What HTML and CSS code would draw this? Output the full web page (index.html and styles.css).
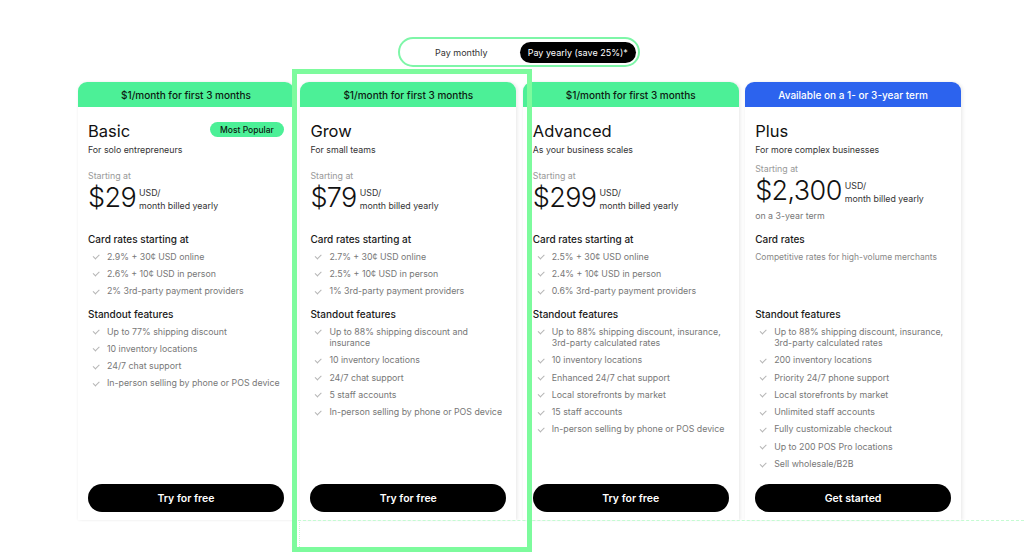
FILE: index.html
```html
<!DOCTYPE html>
<html lang="en">
<head>
<meta charset="utf-8">
<title>Pricing</title>
<link rel="stylesheet" href="styles.css">
</head>
<body>
<main class="page">
  <div class="toggle">
    <span class="toggle__opt">Pay monthly</span>
    <span class="toggle__opt toggle__opt--active">Pay yearly (save 25%)*</span>
  </div>

  <div class="plans">
    <article class="plan">
      <div class="plan__banner">$1/month for first 3 months</div>
      <div class="plan__body">
        <div class="plan__top">
          <h2 class="plan__name">Basic</h2>
          <span class="badge">Most Popular</span>
        </div>
        <p class="plan__tag">For solo entrepreneurs</p>
        <div class="price">
          <p class="price__label">Starting at</p>
          <div class="price__row">
            <span class="price__amount">$29</span>
            <span class="price__unit">USD/<br>month billed yearly</span>
          </div>
        </div>
        <section class="feat feat--rates">
          <h3 class="feat__title">Card rates starting at</h3>
          <ul class="feat__list">
            <li>2.9% + 30¢ USD online</li>
            <li>2.6% + 10¢ USD in person</li>
            <li>2% 3rd-party payment providers</li>
          </ul>
        </section>
        <section class="feat">
          <h3 class="feat__title">Standout features</h3>
          <ul class="feat__list">
            <li>Up to 77% shipping discount</li>
            <li>10 inventory locations</li>
            <li>24/7 chat support</li>
            <li>In-person selling by phone or POS device</li>
          </ul>
        </section>
        <a class="btn" href="#">Try for free</a>
      </div>
    </article>

    <article class="plan">
      <div class="plan__banner">$1/month for first 3 months</div>
      <div class="plan__body">
        <div class="plan__top">
          <h2 class="plan__name">Grow</h2>
        </div>
        <p class="plan__tag">For small teams</p>
        <div class="price">
          <p class="price__label">Starting at</p>
          <div class="price__row">
            <span class="price__amount">$79</span>
            <span class="price__unit">USD/<br>month billed yearly</span>
          </div>
        </div>
        <section class="feat feat--rates">
          <h3 class="feat__title">Card rates starting at</h3>
          <ul class="feat__list">
            <li>2.7% + 30¢ USD online</li>
            <li>2.5% + 10¢ USD in person</li>
            <li>1% 3rd-party payment providers</li>
          </ul>
        </section>
        <section class="feat">
          <h3 class="feat__title">Standout features</h3>
          <ul class="feat__list">
            <li>Up to 88% shipping discount and insurance</li>
            <li>10 inventory locations</li>
            <li>24/7 chat support</li>
            <li>5 staff accounts</li>
            <li>In-person selling by phone or POS device</li>
          </ul>
        </section>
        <a class="btn" href="#">Try for free</a>
      </div>
    </article>

    <article class="plan">
      <div class="plan__banner">$1/month for first 3 months</div>
      <div class="plan__body">
        <div class="plan__top">
          <h2 class="plan__name">Advanced</h2>
        </div>
        <p class="plan__tag">As your business scales</p>
        <div class="price">
          <p class="price__label">Starting at</p>
          <div class="price__row">
            <span class="price__amount">$299</span>
            <span class="price__unit">USD/<br>month billed yearly</span>
          </div>
        </div>
        <section class="feat feat--rates">
          <h3 class="feat__title">Card rates starting at</h3>
          <ul class="feat__list">
            <li>2.5% + 30¢ USD online</li>
            <li>2.4% + 10¢ USD in person</li>
            <li>0.6% 3rd-party payment providers</li>
          </ul>
        </section>
        <section class="feat">
          <h3 class="feat__title">Standout features</h3>
          <ul class="feat__list">
            <li>Up to 88% shipping discount, insurance, 3rd-party calculated rates</li>
            <li>10 inventory locations</li>
            <li>Enhanced 24/7 chat support</li>
            <li>Local storefronts by market</li>
            <li>15 staff accounts</li>
            <li>In-person selling by phone or POS device</li>
          </ul>
        </section>
        <a class="btn" href="#">Try for free</a>
      </div>
    </article>

    <article class="plan">
      <div class="plan__banner plan__banner--blue">Available on a 1- or 3-year term</div>
      <div class="plan__body">
        <div class="plan__top">
          <h2 class="plan__name">Plus</h2>
        </div>
        <p class="plan__tag">For more complex businesses</p>
        <div class="price price--compact">
          <p class="price__label">Starting at</p>
          <div class="price__row">
            <span class="price__amount">$2,300</span>
            <span class="price__unit">USD/<br>month billed yearly</span>
          </div>
          <p class="price__note">on a 3-year term</p>
        </div>
        <section class="feat feat--rates">
          <h3 class="feat__title">Card rates</h3>
          <p class="feat__text">Competitive rates for high-volume merchants</p>
        </section>
        <section class="feat">
          <h3 class="feat__title">Standout features</h3>
          <ul class="feat__list">
            <li>Up to 88% shipping discount, insurance, 3rd-party calculated rates</li>
            <li>200 inventory locations</li>
            <li>Priority 24/7 phone support</li>
            <li>Local storefronts by market</li>
            <li>Unlimited staff accounts</li>
            <li>Fully customizable checkout</li>
            <li>Up to 200 POS Pro locations</li>
            <li>Sell wholesale/B2B</li>
          </ul>
        </section>
        <a class="btn" href="#">Get started</a>
      </div>
    </article>
  </div>

  <div class="guide guide--h"></div>
  <div class="guide guide--v"></div>
  <div class="highlight"></div>
</main>
</body>
</html>
```

FILE: styles.css
```css
* { box-sizing: border-box; }

html, body {
  margin: 0;
  padding: 0;
  background: #fff;
}

body {
  font-family: Inter, "Noto Sans", "Liberation Sans", sans-serif;
  color: #111;
  -webkit-font-smoothing: antialiased;
}

.page {
  position: relative;
  width: 1024px;
  height: 553px;
  padding: 37px 0 0 78px;
  overflow: hidden;
}

/* toggle */
.toggle {
  display: grid;
  grid-template-columns: 1fr 1fr;
  width: 242px;
  height: 30px;
  margin: 0 0 15px 320px;
  padding: 3px 2px 2px 3px;
  border: 2px solid #7ef6a8;
  border-radius: 16px;
  background: #fff;
}

.toggle__opt {
  display: flex;
  align-items: center;
  justify-content: center;
  font-size: 9px;
  color: #333;
  border-radius: 11px;
  height: 21px;
}

.toggle__opt--active {
  background: #000;
  color: #fff;
}

/* plans grid */
.plans {
  display: grid;
  grid-template-columns: repeat(4, 1fr);
  column-gap: 6.5px;
  width: 883px;
}

.plan {
  display: flex;
  flex-direction: column;
  height: 438px;
  background: #fff;
  border-radius: 9px 9px 0 0;
  box-shadow: 0 0 3px rgba(0, 0, 0, 0.07), 3px 0 3px rgba(0, 0, 0, 0.04);
}

.plan__banner {
  height: 25px;
  display: flex;
  align-items: center;
  justify-content: center;
  background: #4cf097;
  color: #0d1a12;
  font-size: 10px;
  font-weight: 500;
  border-radius: 9px 9px 0 0;
}

.plan__banner--blue {
  background: #2c63ee;
  color: #fff;
}

.plan__body {
  flex: 1;
  display: flex;
  flex-direction: column;
  padding: 14px 10px 8px 10px;
}

.plan__top {
  display: flex;
  justify-content: space-between;
  align-items: flex-start;
}

.plan__name {
  margin: 0;
  font-size: 16.5px;
  line-height: 21px;
  font-weight: 400;
  color: #111;
}

.badge {
  margin-top: 1px;
  height: 15px;
  padding: 0 10px;
  display: flex;
  align-items: center;
  background: #4cf097;
  color: #0d1a12;
  border-radius: 8px;
  font-size: 8.5px;
  font-weight: 500;
}

.plan__tag {
  margin: 2px 0 0;
  font-size: 8.8px;
  line-height: 12px;
  color: #333;
}

/* price */
.price {
  margin-top: 14px;
  height: 52px;
}

.price--compact {
  margin-top: 7px;
  height: 59px;
}

.price__label {
  margin: 0;
  font-size: 8.8px;
  line-height: 12px;
  color: #999;
}

.price__row {
  display: flex;
  align-items: flex-start;
}

.price__amount {
  font-size: 27px;
  line-height: 32px;
  font-weight: 300;
  letter-spacing: -0.6px;
  color: #111;
}

.price__unit {
  margin: 4px 0 0 3px;
  font-size: 8.8px;
  line-height: 13px;
  color: #333;
}

.price__note {
  margin: 3px 0 0;
  font-size: 8.8px;
  line-height: 12px;
  color: #777;
}

/* features */
.feat {
  margin-top: 10px;
}

.feat--rates {
  margin-top: 10px;
  min-height: 65px;
}

.feat__title {
  margin: 0;
  font-size: 10px;
  line-height: 14px;
  font-weight: 500;
  color: #1a1a1a;
}

.feat__text {
  margin: 4.5px 0 0;
  font-size: 8.5px;
  line-height: 12px;
  color: #888;
}

.feat__list {
  list-style: none;
  margin: 4.5px 0 0;
  padding: 0;
  display: flex;
  flex-direction: column;
  gap: 5.8px;
}

.feat__list li {
  position: relative;
  padding-left: 19px;
  font-size: 8.8px;
  line-height: 11.5px;
  color: #777;
}

.feat__list li::before {
  content: "";
  position: absolute;
  left: 5px;
  top: 3.5px;
  width: 5px;
  height: 2.5px;
  border-left: 1px solid #b5b5b5;
  border-bottom: 1px solid #b5b5b5;
  transform: rotate(-45deg);
}

/* button */
.btn {
  margin-top: auto;
  height: 28px;
  display: flex;
  align-items: center;
  justify-content: center;
  background: #000;
  color: #fff;
  border-radius: 14px;
  font-size: 10.5px;
  font-weight: 600;
  text-decoration: none;
}

/* overlays */
.highlight {
  position: absolute;
  left: 292px;
  top: 69px;
  width: 240px;
  height: 483px;
  border: 5px solid #7dfb9d;
  pointer-events: none;
}

.guide {
  position: absolute;
  pointer-events: none;
}

.guide--h {
  left: 298px;
  top: 520px;
  width: 726px;
  border-top: 1px dashed #c4fcd2;
}

.guide--v {
  left: 299px;
  top: 520px;
  height: 27px;
  border-left: 1px dotted #c4fcd2;
}
```
